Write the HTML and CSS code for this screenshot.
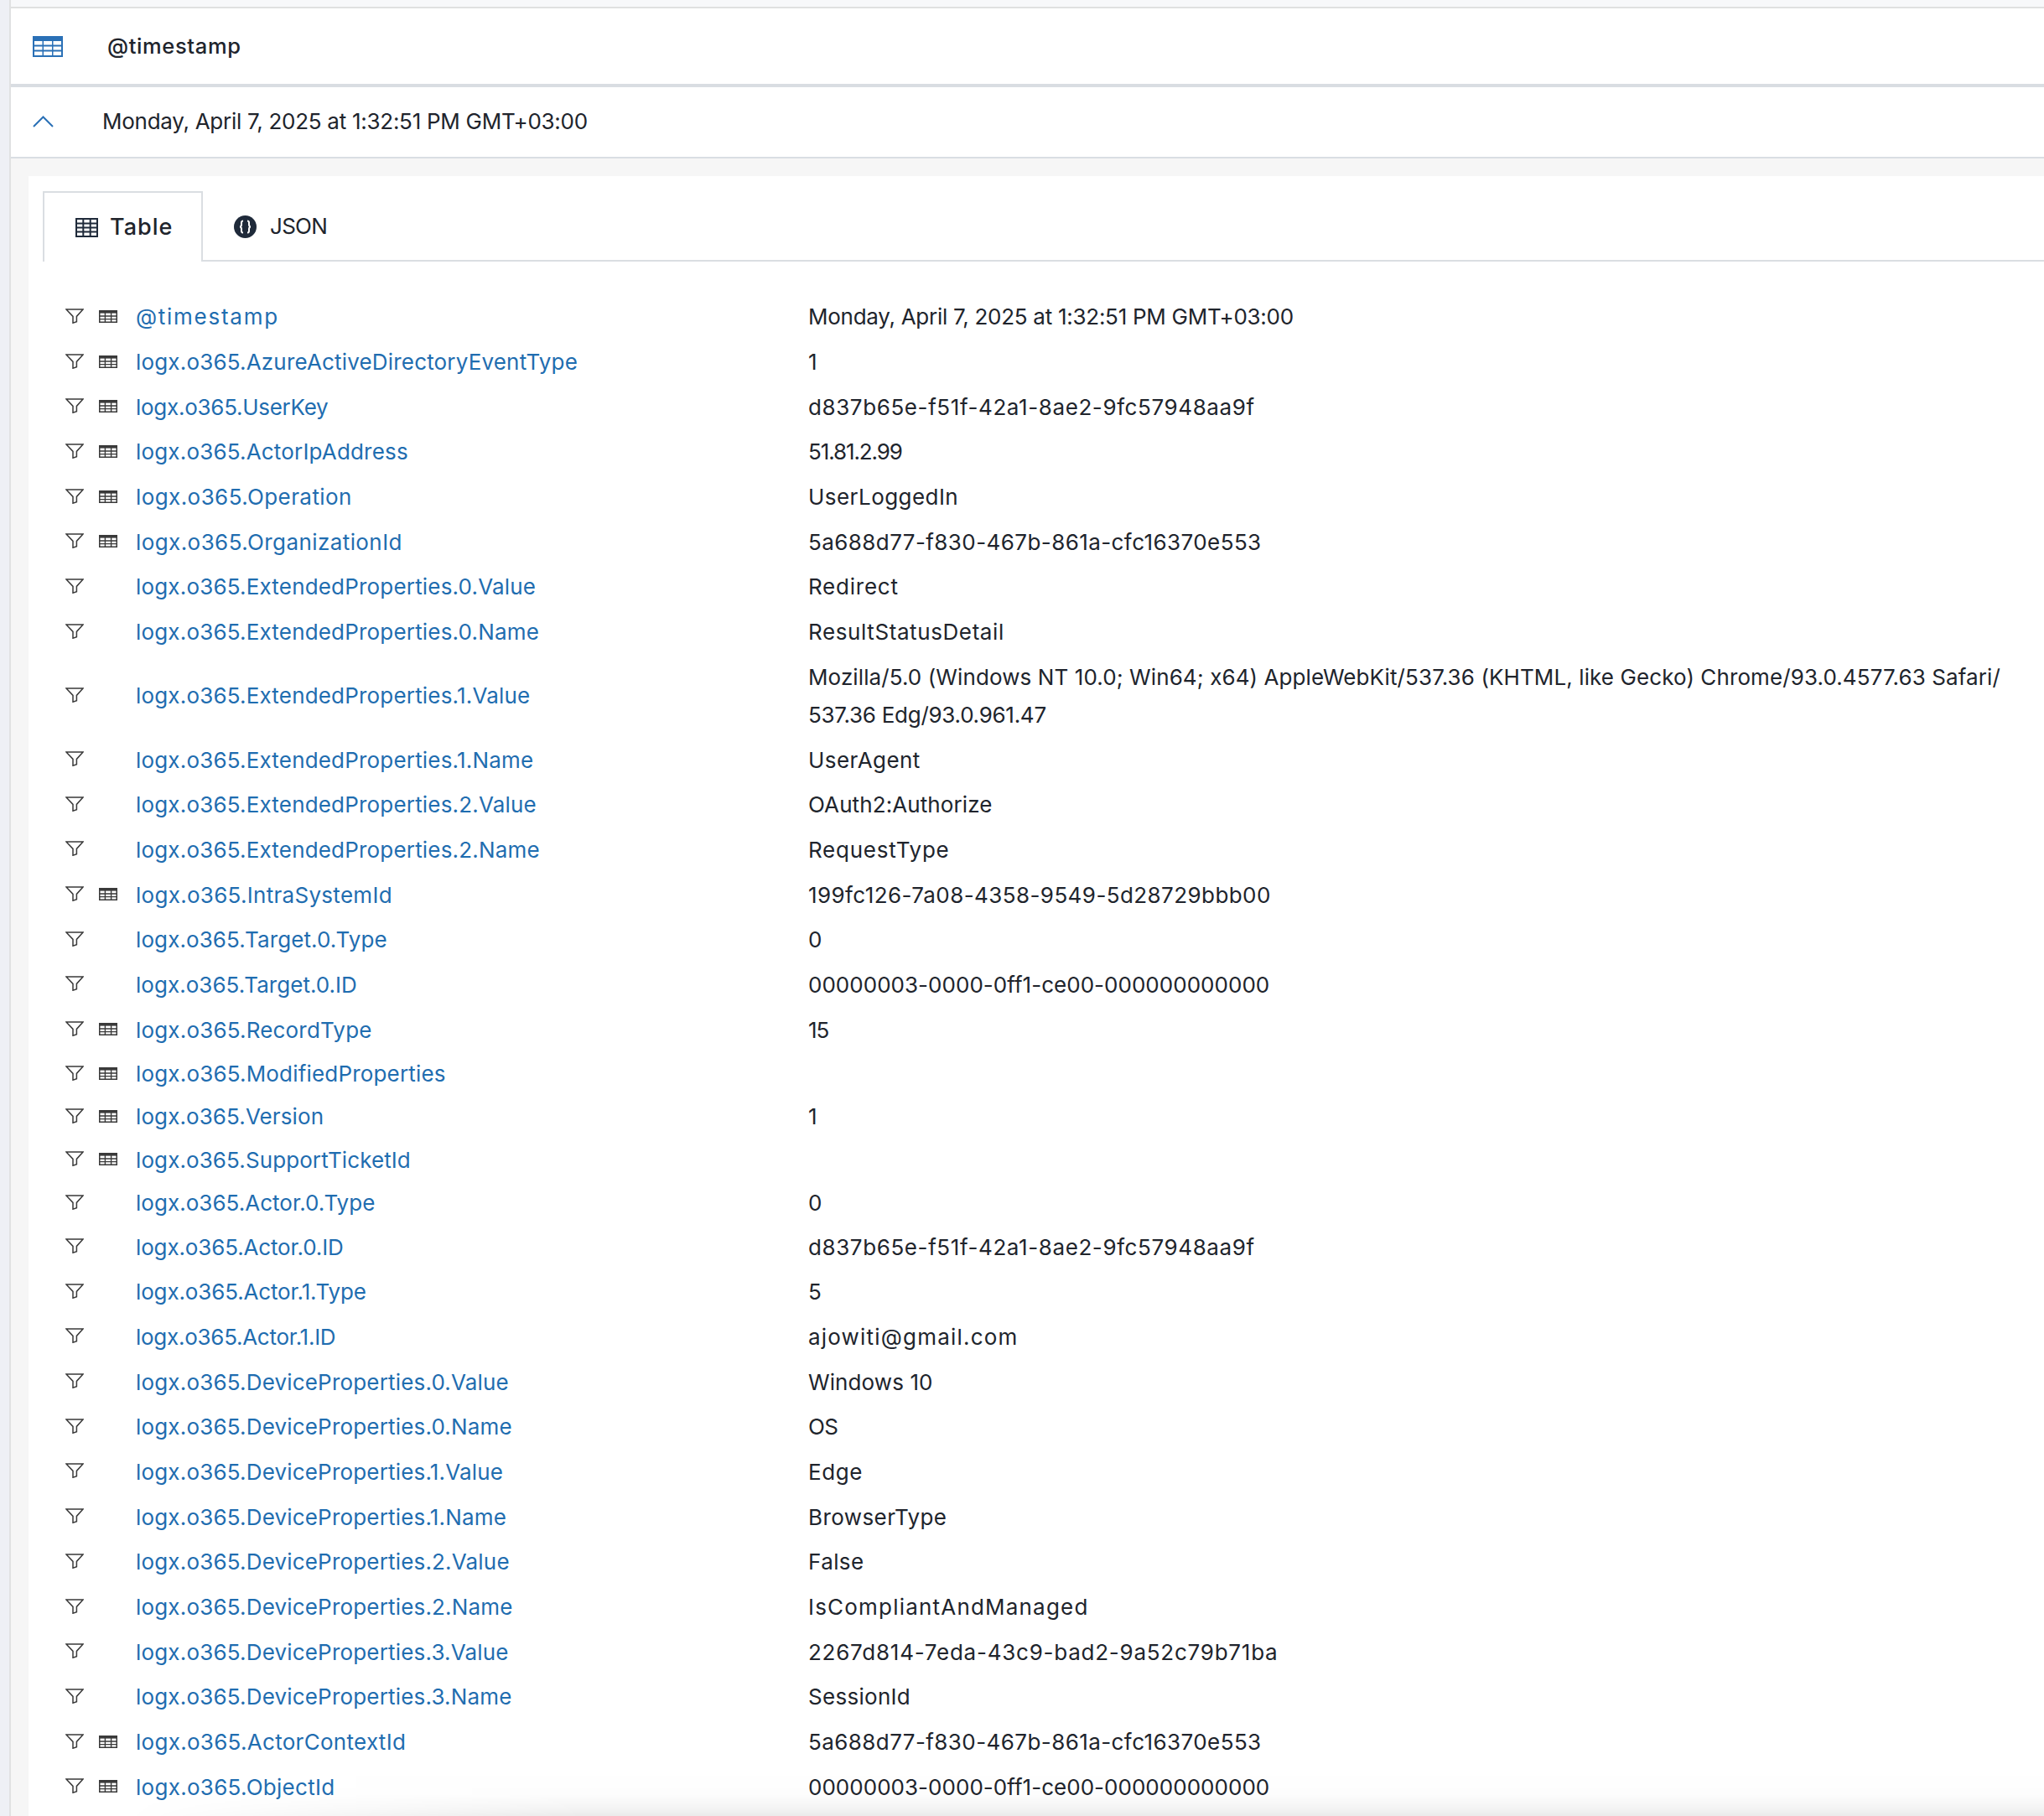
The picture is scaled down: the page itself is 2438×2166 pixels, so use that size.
FILE: index.html
```html
<!DOCTYPE html>
<html lang="en">
<head>
<meta charset="utf-8">
<title>Log document</title>
<link rel="stylesheet" href="styles.css">
</head>
<body>
<svg class="defs" width="0" height="0" aria-hidden="true">
  <symbol id="i-filter" viewBox="0 0 22 18"><path d="M1 1h20l-7.600 8.400v6.400L9 17.200V9.400z" fill="none" stroke="currentColor" stroke-width="1.500" stroke-linejoin="miter"/></symbol>
  <symbol id="i-col" viewBox="0 0 22 15"><path d="M.75.75h20.500v13.500H.75z" fill="none" stroke="currentColor" stroke-width="1.500"/><path d="M0 0h22v3.600H0z" fill="currentColor"/><path d="M0 7h22M0 10.600h22M7.400 0v15M14.600 0v15" stroke="currentColor" stroke-width="1.400" fill="none"/></symbol>
</svg>
<main class="panel">
  <header class="bar bar-title">
    <svg class="icon-head" viewBox="0 0 36 25" aria-hidden="true"><path d="M0 0h36v25H0z" fill="#2a70b6"/><path d="M2 6h9.500v4.500H2zM13 6h10v4.500H13zM24.500 6H34v4.500h-9.500zM2 12.500h9.500v4H2zM13 12.500h10v4H13zM24.500 12.500H34v4h-9.500zM2 18.500h9.500V23H2zM13 18.500h10V23H13zM24.500 18.500H34V23h-9.500z" fill="#fff"/></svg>
    <span class="title">@timestamp</span>
  </header>
  <div class="bar bar-value">
    <svg class="icon-chev" viewBox="0 0 25 14" aria-hidden="true"><path d="M1 13L12.500 1.500 24 13" fill="none" stroke="#2a70b6" stroke-width="2"/></svg>
    <span class="summary">Monday, April 7, 2025 at 1:32:51 PM GMT+03:00</span>
  </div>
  <div class="well">
    <section class="card">
      <nav class="tabs">
        <div class="tab tab-active">
          <svg class="icon-tab" viewBox="0 0 27 23" aria-hidden="true"><path d="M1 1h25v21H1zM1 6.500h25M1 11.500h25M1 16.500h25M9.300 1v21M17.700 1v21" fill="none" stroke="#1f2a3a" stroke-width="2"/></svg>
          <span>Table</span>
        </div>
        <div class="tab">
          <svg class="icon-json" viewBox="0 0 27 27" aria-hidden="true"><circle cx="13.500" cy="13.500" r="13.500" fill="#1f2a3a"/><path d="M11 6.500c-2.500 0-2 2-2 4 0 2-.5 3-2 3 1.500 0 2 1 2 3s-.5 4 2 4M16 6.500c2.500 0 2 2 2 4 0 2 .5 3 2 3-1.500 0-2 1-2 3s.5 4-2 4" fill="none" stroke="#fff" stroke-width="2"/></svg>
          <span class="tab-plain">JSON</span>
        </div>
      </nav>
      <div class="rows">
        <div class="row"><div class="acts"><svg class="i-f"><use href="#i-filter"/></svg><svg class="i-c"><use href="#i-col"/></svg></div><a class="key t-17">@timestamp</a><div class="val t-m3">Monday, April 7, 2025 at 1:32:51 PM GMT+03:00</div></div>
        <div class="row"><div class="acts"><svg class="i-f"><use href="#i-filter"/></svg><svg class="i-c"><use href="#i-col"/></svg></div><a class="key t-2">logx.o365.AzureActiveDirectoryEventType</a><div class="val">1</div></div>
        <div class="row"><div class="acts"><svg class="i-f"><use href="#i-filter"/></svg><svg class="i-c"><use href="#i-col"/></svg></div><a class="key t-m3">logx.o365.UserKey</a><div class="val t-6">d837b65e-f51f-42a1-8ae2-9fc57948aa9f</div></div>
        <div class="row"><div class="acts"><svg class="i-f"><use href="#i-filter"/></svg><svg class="i-c"><use href="#i-col"/></svg></div><a class="key t-2">logx.o365.ActorIpAddress</a><div class="val t-m11">51.81.2.99</div></div>
        <div class="row"><div class="acts"><svg class="i-f"><use href="#i-filter"/></svg><svg class="i-c"><use href="#i-col"/></svg></div><a class="key t-4">logx.o365.Operation</a><div class="val t-4">UserLoggedIn</div></div>
        <div class="row"><div class="acts"><svg class="i-f"><use href="#i-filter"/></svg><svg class="i-c"><use href="#i-col"/></svg></div><a class="key t-4">logx.o365.OrganizationId</a><div class="val t-4">5a688d77-f830-467b-861a-cfc16370e553</div></div>
        <div class="row"><div class="acts"><svg class="i-f"><use href="#i-filter"/></svg></div><a class="key t-2">logx.o365.ExtendedProperties.0.Value</a><div class="val t-8">Redirect</div></div>
        <div class="row"><div class="acts"><svg class="i-f"><use href="#i-filter"/></svg></div><a class="key t-2">logx.o365.ExtendedProperties.0.Name</a><div class="val t-6">ResultStatusDetail</div></div>
        <div class="row"><div class="acts"><svg class="i-f"><use href="#i-filter"/></svg></div><a class="key t-2">logx.o365.ExtendedProperties.1.Value</a><div class="val t-1">Mozilla/5.0 (Windows NT 10.0; Win64; x64) AppleWebKit/537.36 (KHTML, like Gecko) Chrome/93.0.4577.63 Safari/<br><span class="t-m3">537.36 Edg/93.0.961.47</span></div></div>
        <div class="row"><div class="acts"><svg class="i-f"><use href="#i-filter"/></svg></div><a class="key t-2">logx.o365.ExtendedProperties.1.Name</a><div class="val t-4">UserAgent</div></div>
        <div class="row"><div class="acts"><svg class="i-f"><use href="#i-filter"/></svg></div><a class="key t-2">logx.o365.ExtendedProperties.2.Value</a><div class="val t-1">OAuth2:Authorize</div></div>
        <div class="row"><div class="acts"><svg class="i-f"><use href="#i-filter"/></svg></div><a class="key t-2">logx.o365.ExtendedProperties.2.Name</a><div class="val t-8">RequestType</div></div>
        <div class="row"><div class="acts"><svg class="i-f"><use href="#i-filter"/></svg><svg class="i-c"><use href="#i-col"/></svg></div><a class="key t-3">logx.o365.IntraSystemId</a><div class="val t-4">199fc126-7a08-4358-9549-5d28729bbb00</div></div>
        <div class="row"><div class="acts"><svg class="i-f"><use href="#i-filter"/></svg></div><a class="key t-1">logx.o365.Target.0.Type</a><div class="val">0</div></div>
        <div class="row"><div class="acts"><svg class="i-f"><use href="#i-filter"/></svg></div><a class="key t-0">logx.o365.Target.0.ID</a><div class="val t-0">00000003-0000-0ff1-ce00-000000000000</div></div>
        <div class="row"><div class="acts"><svg class="i-f"><use href="#i-filter"/></svg><svg class="i-c"><use href="#i-col"/></svg></div><a class="key t-2">logx.o365.RecordType</a><div class="val t-m11">15</div></div>
        <div class="row row-short"><div class="acts"><svg class="i-f"><use href="#i-filter"/></svg><svg class="i-c"><use href="#i-col"/></svg></div><a class="key t-2">logx.o365.ModifiedProperties</a><div class="val"></div></div>
        <div class="row row-short"><div class="acts"><svg class="i-f"><use href="#i-filter"/></svg><svg class="i-c"><use href="#i-col"/></svg></div><a class="key t-1">logx.o365.Version</a><div class="val">1</div></div>
        <div class="row row-short"><div class="acts"><svg class="i-f"><use href="#i-filter"/></svg><svg class="i-c"><use href="#i-col"/></svg></div><a class="key t-1">logx.o365.SupportTicketId</a><div class="val"></div></div>
        <div class="row row-short"><div class="acts"><svg class="i-f"><use href="#i-filter"/></svg></div><a class="key t-0">logx.o365.Actor.0.Type</a><div class="val">0</div></div>
        <div class="row"><div class="acts"><svg class="i-f"><use href="#i-filter"/></svg></div><a class="key t-m1">logx.o365.Actor.0.ID</a><div class="val t-6">d837b65e-f51f-42a1-8ae2-9fc57948aa9f</div></div>
        <div class="row"><div class="acts"><svg class="i-f"><use href="#i-filter"/></svg></div><a class="key t-m1">logx.o365.Actor.1.Type</a><div class="val">5</div></div>
        <div class="row"><div class="acts"><svg class="i-f"><use href="#i-filter"/></svg></div><a class="key t-m3">logx.o365.Actor.1.ID</a><div class="val t-12">ajowiti@gmail.com</div></div>
        <div class="row"><div class="acts"><svg class="i-f"><use href="#i-filter"/></svg></div><a class="key t-2">logx.o365.DeviceProperties.0.Value</a><div class="val t-1">Windows 10</div></div>
        <div class="row"><div class="acts"><svg class="i-f"><use href="#i-filter"/></svg></div><a class="key t-2">logx.o365.DeviceProperties.0.Name</a><div class="val">OS</div></div>
        <div class="row"><div class="acts"><svg class="i-f"><use href="#i-filter"/></svg></div><a class="key t-2">logx.o365.DeviceProperties.1.Value</a><div class="val t-6">Edge</div></div>
        <div class="row"><div class="acts"><svg class="i-f"><use href="#i-filter"/></svg></div><a class="key t-2">logx.o365.DeviceProperties.1.Name</a><div class="val t-4">BrowserType</div></div>
        <div class="row"><div class="acts"><svg class="i-f"><use href="#i-filter"/></svg></div><a class="key t-2">logx.o365.DeviceProperties.2.Value</a><div class="val t-4">False</div></div>
        <div class="row"><div class="acts"><svg class="i-f"><use href="#i-filter"/></svg></div><a class="key t-2">logx.o365.DeviceProperties.2.Name</a><div class="val t-12">IsCompliantAndManaged</div></div>
        <div class="row"><div class="acts"><svg class="i-f"><use href="#i-filter"/></svg></div><a class="key t-2">logx.o365.DeviceProperties.3.Value</a><div class="val t-8">2267d814-7eda-43c9-bad2-9a52c79b71ba</div></div>
        <div class="row"><div class="acts"><svg class="i-f"><use href="#i-filter"/></svg></div><a class="key t-2">logx.o365.DeviceProperties.3.Name</a><div class="val t-3">SessionId</div></div>
        <div class="row"><div class="acts"><svg class="i-f"><use href="#i-filter"/></svg><svg class="i-c"><use href="#i-col"/></svg></div><a class="key t-3">logx.o365.ActorContextId</a><div class="val t-4">5a688d77-f830-467b-861a-cfc16370e553</div></div>
        <div class="row"><div class="acts"><svg class="i-f"><use href="#i-filter"/></svg><svg class="i-c"><use href="#i-col"/></svg></div><a class="key t-3">logx.o365.ObjectId</a><div class="val t-0">00000003-0000-0ff1-ce00-000000000000</div></div>
      </div>
    </section>
  </div>
</main>
<div class="fade"></div>
</body>
</html>
```
FILE: styles.css
```css
* { box-sizing: border-box; }
html, body { margin: 0; height: 100%; overflow: hidden; }
body {
  position: relative;
  background: #eef0f5;
  padding-left: 11px;
  font-family: Inter, "Open Sans", sans-serif;
  font-size: 26px;
  color: #20242c;
}
.defs { position: absolute; }
.panel {
  border-left: 2px solid #e0e1e2;
  padding-top: 8px;
  background: #f7f8fa;
  min-height: 100%;
}
.bar {
  display: flex;
  align-items: center;
  background: #fff;
}
.bar-title {
  height: 96px;
  padding-left: 26px;
  border-top: 2px solid #dfe0e0;
  border-bottom: 4px solid #d9dde2;
}
.bar-value {
  height: 85px;
  padding-left: 26px;
  padding-bottom: 2px;
  border-bottom: 2px solid #d9dee3;
}
.icon-head { width: 36px; height: 25px; margin-right: 53px; }
.title { font-weight: 500; font-size: 25.500px; letter-spacing: .64px; margin-bottom: 1px; }
.icon-chev { width: 25px; height: 14px; margin-right: 58px; }
.summary { letter-spacing: -.27px; }
.well {
  background: #f6f6f6;
  padding: 21px 0 0 21px;
}
.card {
  background: #fff;
  padding-top: 18px;
  min-height: 1960px;
}
.tabs {
  display: flex;
  height: 84px;
  margin-left: 17px;
  border-bottom: 2px solid #dadee2;
}
.tab {
  display: flex;
  align-items: center;
  flex: none;
  height: 84px;
  padding: 0 0 0 37px;
  font-size: 26px;
  font-weight: 500;
}
.tab span { margin-bottom: 2px; }
.tab-active {
  background: #fff;
  border: 2px solid #dadee2;
  border-bottom: 0;
  width: 191px;
}
.tab-active span { font-size: 27px; letter-spacing: 1px; }
.tab-plain { font-weight: 400; letter-spacing: -.7px; }
.icon-tab { flex: none; width: 27px; height: 23px; margin-right: 14px; }
.icon-json { flex: none; width: 27px; height: 27px; margin-right: 16px; }
.rows { position: relative; z-index: 2; padding-top: 39px; }
.row {
  display: grid;
  grid-template-columns: 128px 802px minmax(0, 1fr);
  align-items: center;
  padding: 4.350px 0;
  line-height: 45px;
  min-height: 53.700px;
}
.row-short { padding: 3.150px 0; min-height: 51.300px; }
.acts {
  display: flex;
  align-items: flex-start;
  gap: 18px;
  margin-top: -2px;
  padding-left: 44px;
  color: #3a3a3a;
}
.i-f { width: 22px; height: 18px; }
.i-c { width: 22px; height: 15px; margin-top: 2px; }
.key { color: #1f6db0; white-space: nowrap; }
.val { letter-spacing: -.55px; min-width: 0; }
.t-m11 { letter-spacing: -1.1px; }
.t-m3 { letter-spacing: -.27px; }
.t-m1 { letter-spacing: -.14px; }
.t-0 { letter-spacing: .03px; }
.t-1 { letter-spacing: .1px; }
.t-2 { letter-spacing: .18px; }
.t-3 { letter-spacing: .29px; }
.t-4 { letter-spacing: .42px; }
.t-6 { letter-spacing: .6px; }
.t-8 { letter-spacing: .76px; }
.t-12 { letter-spacing: 1.2px; }
.t-17 { letter-spacing: 1.73px; }
.fade {
  position: absolute;
  z-index: 1;
  left: 150px;
  right: 0;
  bottom: 0;
  height: 56px;
  background: linear-gradient(to bottom, rgba(0,0,0,0), rgba(0,0,0,.008) 54%, rgba(0,0,0,.045) 82%, rgba(0,0,0,.08));
  -webkit-mask-image: linear-gradient(to right, transparent, #000 550px);
  mask-image: linear-gradient(to right, transparent, #000 550px);
  pointer-events: none;
}
```
